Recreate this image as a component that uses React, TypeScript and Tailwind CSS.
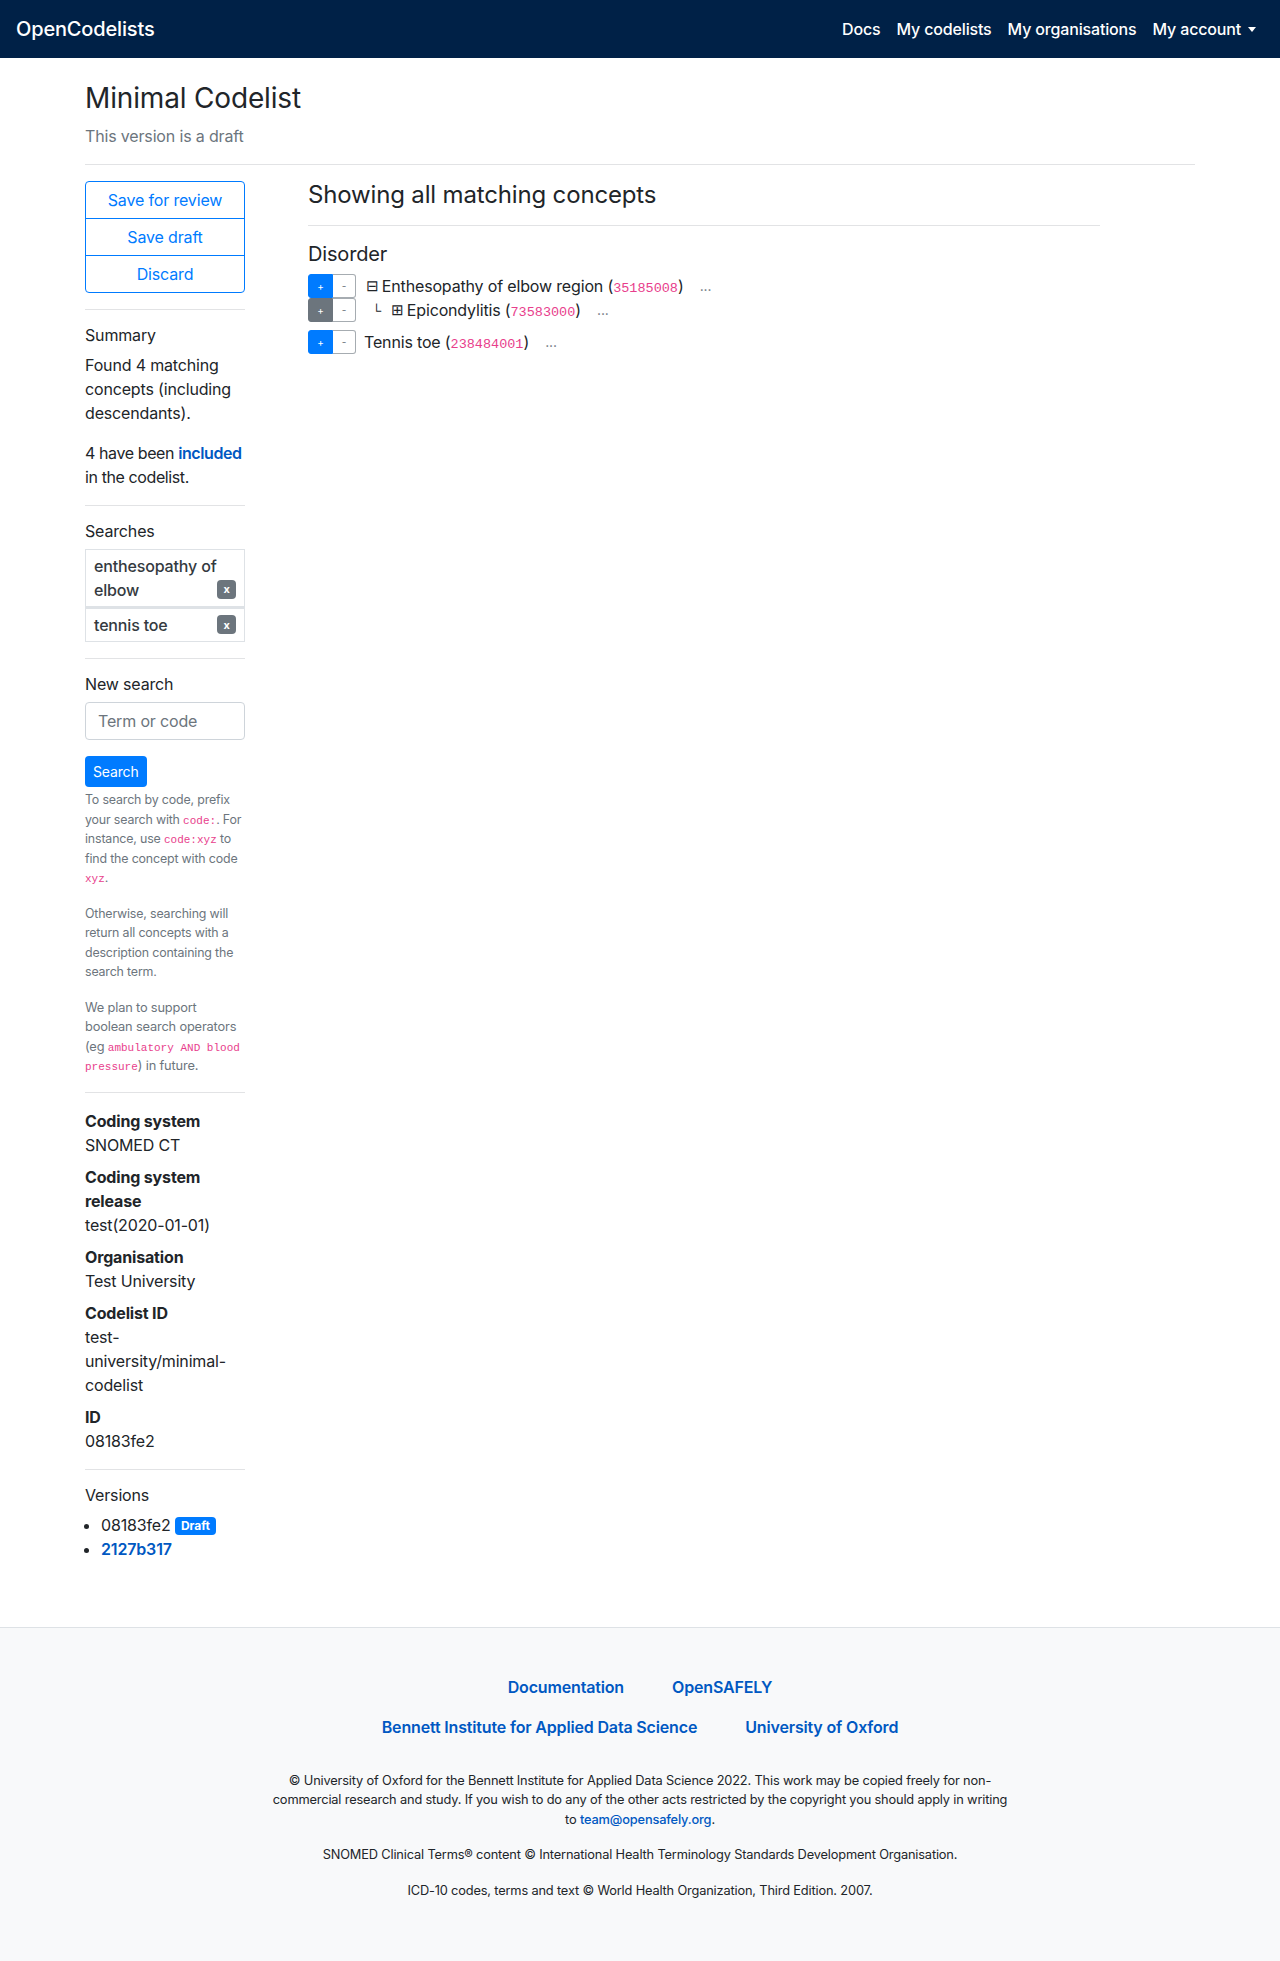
import React from "react";

const sans = "font-['Inter',sans-serif]";
const mono = "font-['Liberation_Mono',monospace]";

function Code({ children, className = "" }: { children: React.ReactNode; className?: string }) {
  return <code className={`${mono} leading-none tracking-normal text-[#e83e8c] ${className}`}>{children}</code>;
}

function AddRemove({ included }: { included: "blue" | "gray" }) {
  return (
    <div className="flex h-6 shrink-0">
      <button
        className={`w-[25px] h-6 rounded-l-[3px] border text-[10px] leading-none text-white ${
          included === "blue" ? "bg-[#007bff] border-[#007bff]" : "bg-[#6c757d] border-[#6c757d]"
        }`}
      >
        +
      </button>
      <button className="w-[23px] h-6 rounded-r-[3px] border border-[#6c757d]/60 border-l-0 bg-white text-[10px] leading-none text-[#6c757d]">
        -
      </button>
    </div>
  );
}

function Hr() {
  return <div className="h-px bg-[#e2e3e5] my-4" />;
}

function XBadge() {
  return (
    <span className="w-[19px] h-[19px] rounded bg-[#6c757d] text-white text-[11px] font-bold flex items-center justify-center">
      x
    </span>
  );
}

export default function App() {
  const details = [
    { label: "Coding system", value: "SNOMED CT" },
    { label: "Coding system release", value: "test(2020-01-01)" },
    { label: "Organisation", value: "Test University" },
    { label: "Codelist ID", value: "test-university/minimal-codelist" },
    { label: "ID", value: "08183fe2" },
  ];

  return (
    <div className={`${sans} tracking-[-0.01em] text-[#212529] min-h-[1961px] flex flex-col`}>
      <nav className="h-[58px] bg-[#002147] flex items-center justify-between pl-4 pr-6">
        <span className="text-white text-[20px] font-medium">OpenCodelists</span>
        <div className="flex items-center gap-4 text-white text-base font-medium">
          <span>Docs</span>
          <span>My codelists</span>
          <span>My organisations</span>
          <span className="flex items-center">
            My account
            <span className="ml-[7px] w-0 h-0 border-l-[4px] border-r-[4px] border-t-[5px] border-l-transparent border-r-transparent border-t-white" />
          </span>
        </div>
      </nav>

      <main className="w-[1140px] mx-auto px-[15px] flex-1">
        <h1 className="text-[28px] leading-[1.2] mt-6 mb-2">Minimal Codelist</h1>
        <p className="text-[#6c757d] leading-6">This version is a draft</p>
        <div className="h-px bg-[#e2e3e5] mt-4 mb-4" />

        <div className="flex gap-[63px]">
          {/* sidebar */}
          <aside className="w-[160px] shrink-0">
            <div className="flex flex-col">
              {["Save for review", "Save draft", "Discard"].map((t, i) => (
                <button
                  key={t}
                  className={`h-[38px] border border-[#007bff] text-[#007bff] ${i > 0 ? "-mt-px" : "rounded-t"} ${
                    i === 2 ? "rounded-b" : ""
                  }`}
                >
                  {t}
                </button>
              ))}
            </div>

            <Hr />
            <h6 className="leading-[1.2] mb-2">Summary</h6>
            <p className="leading-6 mb-4">Found 4 matching concepts (including descendants).</p>
            <p className="leading-6 tracking-[-0.025em]">
              4 have been <span className="text-[#0058c2] font-semibold">included</span> in the codelist.
            </p>

            <Hr />
            <h6 className="leading-[1.2] mb-2">Searches</h6>
            <div className="flex flex-col font-medium text-[#343a40]">
              <div className="relative border border-[#dee2e6] px-2 py-1">
                <span className="block leading-6">
                  enthesopathy of
                  <br />
                  elbow
                </span>
                <span className="absolute right-2 bottom-[7px]">
                  <XBadge />
                </span>
              </div>
              <div className="border border-[#dee2e6] border-t-[2px] px-2 py-1 flex items-center justify-between">
                <span className="leading-6">tennis toe</span>
                <XBadge />
              </div>
            </div>

            <Hr />
            <h6 className="leading-[1.2] mb-2">New search</h6>
            <input
              className="w-full h-[38px] border border-[#ced4da] rounded px-3 placeholder:text-[#6c757d] outline-none"
              placeholder="Term or code"
            />
            <button className="mt-4 h-[31px] px-2 rounded bg-[#007bff] text-white text-sm">Search</button>
            <div className="mt-[3px] text-[12.4px] leading-[19.5px] text-[#6c757d]">
              <p className="mb-4">
                To search by code, prefix your search with <Code className="text-[11px]">code:</Code>. For instance, use{" "}
                <Code className="text-[11px]">code:xyz</Code> to find the concept with code{" "}
                <Code className="text-[11px]">xyz</Code>.
              </p>
              <p className="mb-4">
                Otherwise, searching will return all concepts with a description containing the search term.
              </p>
              <p className="text-[12.8px]">
                We plan to support boolean search operators (eg{" "}
                <Code className="text-[11px]">ambulatory AND blood pressure</Code>) in future.
              </p>
            </div>

            <Hr />
            <dl>
              {details.map((d) => (
                <div key={d.label} className="mb-2 leading-6">
                  <dt className="font-bold">{d.label}</dt>
                  <dd className="break-words">{d.value}</dd>
                </div>
              ))}
            </dl>

            <div className="h-px bg-[#e2e3e5] mt-4 mb-4" />
            <h6 className="leading-[1.2] mb-2">Versions</h6>
            <ul className="list-disc pl-4 leading-6">
              <li>
                08183fe2{" "}
                <span className="inline-block align-[1px] px-[6px] h-[18px] leading-[18px] rounded bg-[#007bff] text-white text-[12px] font-bold tracking-normal">
                  Draft
                </span>
              </li>
              <li>
                <span className="text-[#0058c2] font-semibold">2127b317</span>
              </li>
            </ul>
          </aside>

          {/* concepts */}
          <section className="w-[792px]">
            <h4 className="text-2xl leading-[1.2] mb-4">Showing all matching concepts</h4>
            <div className="h-px bg-[#e2e3e5] mb-4" />
            <h5 className="text-[20px] leading-6 mb-2">Disorder</h5>

            <div className="flex items-center h-6">
              <AddRemove included="blue" />
              <span className="ml-[10px] mr-[3px] text-[15px]">⊟</span>
              <span>
                Enthesopathy of elbow region (<Code className="text-[13.5px]">35185008</Code>)
              </span>
              <span className="ml-4 text-[#6c757d] text-sm">...</span>
            </div>
            <div className="flex items-center h-6">
              <AddRemove included="gray" />
              <span className="ml-4 w-[19px] text-[13px]">└</span>
              <span className="mr-[3px] text-[15px]">⊞</span>
              <span>
                Epicondylitis (<Code className="text-[13.5px]">73583000</Code>)
              </span>
              <span className="ml-4 text-[#6c757d] text-sm">...</span>
            </div>
            <div className="flex items-center h-6 mt-2">
              <AddRemove included="blue" />
              <span className="ml-2">
                Tennis toe (<Code className="text-[13.5px]">238484001</Code>)
              </span>
              <span className="ml-4 text-[#6c757d] text-sm">...</span>
            </div>
          </section>
        </div>
      </main>

      <footer className="mt-[66px] border-t border-[#dee2e6] bg-[#f8f9fa] pt-[47px] pb-[64px]">
        <div className="flex justify-center gap-12 font-semibold text-[#0058c2] leading-6">
          <span>Documentation</span>
          <span>OpenSAFELY</span>
        </div>
        <div className="flex justify-center gap-12 font-semibold text-[#0058c2] leading-6 mt-4">
          <span>Bennett Institute for Applied Data Science</span>
          <span>University of Oxford</span>
        </div>
        <div className="max-w-[745px] mx-auto text-center text-[12.8px] leading-[19.5px] mt-[32px]">
          <p>
            © University of Oxford for the Bennett Institute for Applied Data Science 2022. This work may be copied freely for
            non-commercial research and study. If you wish to do any of the other acts restricted by the copyright you should
            apply in writing to <span className="text-[#0058c2] font-medium">team@opensafely.org</span>.
          </p>
          <p className="mt-4">SNOMED Clinical Terms® content © International Health Terminology Standards Development Organisation.</p>
          <p className="mt-4">ICD-10 codes, terms and text © World Health Organization, Third Edition. 2007.</p>
        </div>
      </footer>
    </div>
  );
}
